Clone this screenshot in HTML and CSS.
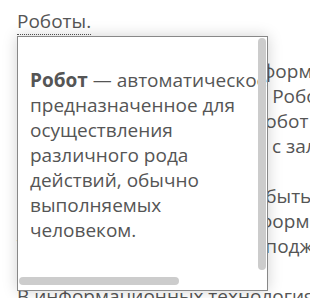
FILE: index.html
```html
<!DOCTYPE html>
<html lang="ru">

<head>
    <meta charset="UTF-8" />
    <meta name="viewport" content="width=device-width, initial-scale=1.0" />
    <title>Роботы</title>
    <link rel="stylesheet" href="styles.css">
</head>

<body>
    <div class="page">
        <p class="lead"><span class="term">Роботы.</span></p>
        <p>Системы управления, с информационным каналом<br>пользуются информацией. Роботы применяются<br>промышленности. Такой робот<br>выполняет всю программу с заложенными параметрами.</p>
        <p>Роботы в наши дни, могут быть физическими.<br>Программные и бытовые формы роботов.<br>Такие программы обычно поджидают команды оператора.</p>
        <p>В информационных технологиях роботами называют программы.</p>

        <div class="tip">
            <div class="tip-body">
                <p class="tip-text"><b>Робот</b>&nbsp;—&nbsp;автоматическое предназначенное для осуществления различного рода действий, обычно выполняемых человеком.</p>
            </div>
            <span class="thumb thumb-v"></span>
            <span class="thumb thumb-h"></span>
        </div>
    </div>
</body>

</html>
```

FILE: styles.css
```css
* {
    box-sizing: border-box;
}

html,
body {
    overflow: hidden;
}

body {
    margin: 0;
    font-family: "Open Sans", "Noto Sans", sans-serif;
    font-size: 19px;
    line-height: 25px;
    color: #555;
    background: #fff;
}

.page {
    position: relative;
    width: 760px;
    padding: 9px 0 0 17px;
}

p {
    margin: 0 0 25px;
}

.term {
    border-bottom: 1px dotted #555;
}

/* всплывающая подсказка поверх текста */
.tip {
    position: absolute;
    top: 36px;
    left: 17px;
    width: 251px;
    height: 255px;
    background: #fff;
    border: 1px solid #888;
    box-shadow: 0 0 14px rgba(0, 0, 0, 0.18);
    overflow: hidden;
}

.tip-body {
    width: 345px;
    padding: 31px 12px 44px;
}

.tip-text {
    width: 210px;
    margin: 0;
}

.thumb {
    position: absolute;
    background: #ccc;
    border-radius: 4px;
}

.thumb-v {
    top: 1px;
    right: 1px;
    width: 8px;
    height: 232px;
}

.thumb-h {
    left: 1px;
    bottom: 5px;
    width: 160px;
    height: 8px;
}
```
